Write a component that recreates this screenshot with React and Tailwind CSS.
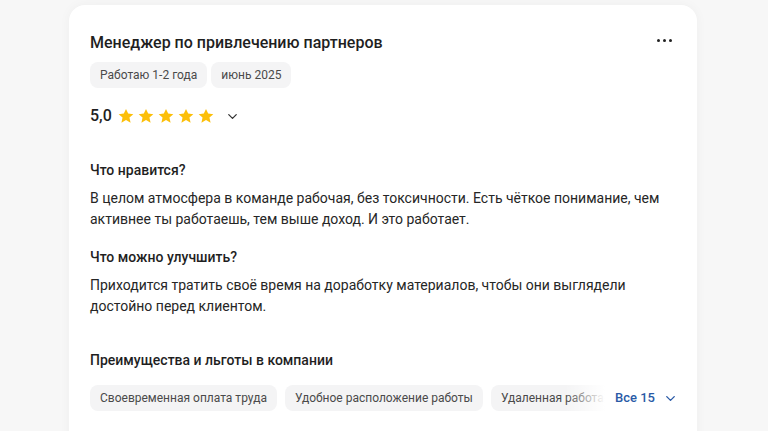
import { ChevronDown } from 'lucide-react'

const font = { fontFamily: 'Roboto, "Noto Sans", sans-serif' }

function Star() {
  return (
    <svg width="18" height="18" viewBox="0 0 24 24" className="shrink-0">
      <path
        d="M12 2.5l2.9 6.3 6.9.7-5.2 4.6 1.5 6.8L12 17.4l-6.1 3.5 1.5-6.8-5.2-4.6 6.9-.7z"
        fill="#fcbf09"
      />
    </svg>
  )
}

function Tag({ children }) {
  return (
    <span className="shrink-0 h-[26px] px-[10px] flex items-center rounded-lg bg-[#f4f4f5] text-[12px] text-[#4a4a4a] whitespace-nowrap">
      {children}
    </span>
  )
}

export default function App() {
  const benefits = ['Своевременная оплата труда', 'Удобное расположение работы', 'Удаленная работа', 'Гибкий график']

  return (
    <div className="min-h-screen bg-[#f7f7f7] pt-[5px] overflow-hidden" style={font}>
      <div className="w-[628px] ml-[69px] bg-white rounded-t-2xl shadow-[0_0_12px_rgba(0,0,0,0.04)] pl-[21px] pr-[22px] pt-[29px] pb-10 text-[#1f1f1f]">
        {/* заголовок */}
        <div className="flex items-start justify-between">
          <h2 className="text-[16px] leading-[18px] font-medium">Менеджер по привлечению партнеров</h2>
          <div className="flex gap-[3px] mt-[5px] mr-[3px]">
            <span className="w-[3px] h-[3px] rounded-full bg-[#222]"></span>
            <span className="w-[3px] h-[3px] rounded-full bg-[#222]"></span>
            <span className="w-[3px] h-[3px] rounded-full bg-[#222]"></span>
          </div>
        </div>
        <div className="flex gap-1 mt-[10px]">
          <Tag>Работаю 1-2 года</Tag>
          <Tag>июнь 2025</Tag>
        </div>

        {/* оценка */}
        <div className="flex items-center mt-[17px] h-[22px]">
          <span className="text-[16px] font-medium mr-[5px]">5,0</span>
          <div className="flex gap-[2px]">
            <Star /><Star /><Star /><Star /><Star />
          </div>
          <ChevronDown size={15} strokeWidth={2} className="ml-[10px] text-[#333]" />
        </div>

        {/* отзыв */}
        <div className="mt-[33px]">
          <h3 className="text-[14px] leading-[20px] font-medium">Что нравится?</h3>
          <p className="mt-[8px] text-[14px] leading-[21px] text-[#262626]">
            В целом атмосфера в команде рабочая, без токсичности. Есть чёткое понимание, чем
            <br />
            активнее ты работаешь, тем выше доход. И это работает.
          </p>
        </div>
        <div className="mt-[17px]">
          <h3 className="text-[14px] leading-[20px] font-medium">Что можно улучшить?</h3>
          <p className="mt-[8px] text-[14px] leading-[21px] text-[#262626]">
            Приходится тратить своё время на доработку материалов, чтобы они выглядели
            <br />
            достойно перед клиентом.
          </p>
        </div>

        {/* льготы */}
        <div className="mt-[33px]">
          <h3 className="text-[14px] leading-[20px] font-medium">Преимущества и льготы в компании</h3>
          <div className="flex items-center mt-[15px]">
            <div className="relative w-[515px] shrink-0 overflow-hidden">
              <div className="flex gap-2">
                {benefits.map(b => <Tag key={b}>{b}</Tag>)}
              </div>
              <div className="absolute right-0 top-0 h-full w-[40px] bg-gradient-to-r from-white/0 to-white"></div>
            </div>
            <button className="ml-[10px] shrink-0 whitespace-nowrap flex items-center text-[13px] font-medium text-[#2a5aa6]">
              Все 15
              <ChevronDown size={15} strokeWidth={2.2} className="ml-[8px]" />
            </button>
          </div>
        </div>
      </div>
    </div>
  )
}
